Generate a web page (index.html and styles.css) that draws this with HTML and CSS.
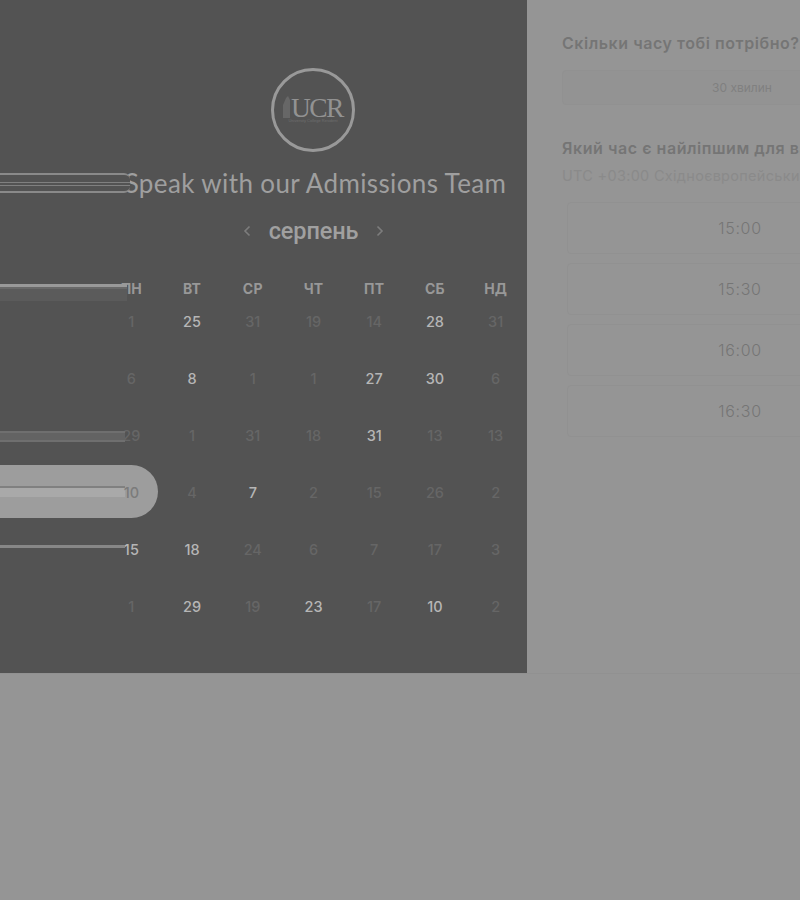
FILE: index.html
```html
<!DOCTYPE html>
<html lang="uk">
<head>
<meta charset="utf-8">
<title>Speak with our Admissions Team</title>
<link rel="stylesheet" href="styles.css">
</head>
<body>
<main class="page">
  <section class="left">
    <div class="logo">
      <svg class="logo-mark" viewBox="0 0 84 84" width="84" height="84" aria-hidden="true">
        <circle cx="42" cy="42" r="40.5" fill="none" stroke="#999999" stroke-width="3"/>
        <path d="M12 50V37l3-7 2-2 2 4v18z" fill="#676767"/>
      </svg>
      <span class="logo-text">UCR</span>
      <span class="logo-sub">University College Resident</span>
    </div>
    <h1 class="title">Speak with our Admissions Team</h1>
    <div class="month">
      <svg class="chev" viewBox="0 0 10 14" width="10" height="14" aria-hidden="true"><path d="M7.5 2.5 3 7l4.5 4.5" fill="none" stroke="#7d7d7d" stroke-width="1.6"/></svg>
      <span class="month-name">серпень</span>
      <svg class="chev" viewBox="0 0 10 14" width="10" height="14" aria-hidden="true"><path d="M2.5 2.5 7 7l-4.5 4.5" fill="none" stroke="#7d7d7d" stroke-width="1.6"/></svg>
    </div>
    <div class="cal-wrap">
      <div class="cal">
        <span class="dow">ПН</span><span class="dow">ВТ</span><span class="dow">СР</span><span class="dow">ЧТ</span><span class="dow">ПТ</span><span class="dow">СБ</span><span class="dow">НД</span>
        <span class="d off">1</span><span class="d on">25</span><span class="d off">31</span><span class="d off">19</span><span class="d off">14</span><span class="d on">28</span><span class="d off">31</span>
        <span class="d off">6</span><span class="d on">8</span><span class="d off">1</span><span class="d off">1</span><span class="d on">27</span><span class="d on">30</span><span class="d off">6</span>
        <span class="d off">29</span><span class="d off">1</span><span class="d off">31</span><span class="d off">18</span><span class="d on">31</span><span class="d off">13</span><span class="d off">13</span>
        <span class="d off sel-num">10</span><span class="d off">4</span><span class="d on">7</span><span class="d off">2</span><span class="d off">15</span><span class="d off">26</span><span class="d off">2</span>
        <span class="d on">15</span><span class="d on">18</span><span class="d off">24</span><span class="d off">6</span><span class="d off">7</span><span class="d off">17</span><span class="d off">3</span>
        <span class="d off">1</span><span class="d on">29</span><span class="d off">19</span><span class="d on">23</span><span class="d off">17</span><span class="d on">10</span><span class="d off">2</span>
      </div>
    </div>
    <div class="smear smear-title"></div>
    <div class="smear smear-dow"></div>
    <div class="smear smear-r3"></div>
    <div class="pill"><div class="pill-band"></div></div>
    <div class="smear smear-r5"></div>
  </section>
  <section class="right">
    <h2 class="q">Скільки часу тобі потрібно?</h2>
    <div class="duration">30 хвилин</div>
    <h2 class="q q2">Який час є найліпшим для вас?</h2>
    <p class="tz">UTC +03:00 Східноєвропейський час</p>
    <ul class="slots">
      <li class="slot">15:00</li>
      <li class="slot">15:30</li>
      <li class="slot">16:00</li>
      <li class="slot">16:30</li>
    </ul>
  </section>
</main>
</body>
</html>
```
FILE: styles.css
```css
html, body {
  margin: 0;
  width: 800px;
  height: 900px;
  overflow: hidden;
  background: #959595;
  font-family: Inter, "Noto Sans", sans-serif;
}
.page {
  display: flex;
  width: 800px;
  height: 674px;
  border-bottom: 1px solid #919191;
  box-sizing: border-box;
}
.left {
  position: relative;
  flex: none;
  width: 527px;
  height: 673px;
  background: #535353;
  box-sizing: border-box;
  padding: 68px 1px 0 101px;
  display: flex;
  flex-direction: column;
  align-items: center;
}
.logo {
  position: relative;
  width: 84px;
  height: 84px;
  flex: none;
  margin-right: 1px;
}
.logo-mark { display: block; }
.logo-text {
  position: absolute;
  left: 20px;
  top: 30px;
  font: 27.5px/20px "Liberation Serif", serif;
  letter-spacing: -1.6px;
  color: #929292;
}
.logo-sub {
  position: absolute;
  left: 11px;
  top: 50px;
  width: 62px;
  text-align: center;
  white-space: nowrap;
  overflow: hidden;
  font: 4px/5px "Liberation Sans", sans-serif;
  color: #6f6f6f;
}
.title {
  margin: 14px 0 0 4px;
  font: 400 26px/34px Lato, sans-serif;
  letter-spacing: 0.38px;
  color: #9f9f9f;
  white-space: nowrap;
}
.month {
  display: flex;
  align-items: center;
  justify-content: center;
  gap: 17px;
  margin-top: 15px;
  height: 32px;
  flex: none;
}
.month-name {
  font: 500 23.5px/32px Roboto, sans-serif;
  color: #a0a0a0;
  letter-spacing: -0.1px;
}
.chev { flex: none; }
.cal-wrap {
  width: 425px;
  margin-top: 32px;
}
.cal {
  display: grid;
  grid-template-columns: repeat(7, 1fr);
  grid-template-rows: 33px repeat(6, 57px);
  justify-items: center;
  align-items: start;
}
.cal > span { position: relative; }
.dow {
  font: 700 14px/20px Inter, sans-serif;
  color: #989898;
  letter-spacing: 0.2px;
}
.d {
  font: 500 14.5px/20px Inter, sans-serif;
}
.on { color: #b6b6b6; }
.off { color: #666666; }
.sel-num { color: #7b7b7b; z-index: 2; }
.smear {
  position: absolute;
  left: 0;
  width: 125px;
  box-sizing: border-box;
}
.smear-title {
  top: 173px;
  height: 20px;
  width: 130px;
  border: solid #8a8a8a;
  border-width: 2px 0;
  border-radius: 0 6px 6px 0;
  background: linear-gradient(#535353 0 7px, #808080 7px 8px, #535353 8px 10px, #808080 10px 11px, #535353 11px);
}
.smear-dow {
  top: 284px;
  width: 127px;
  height: 17px;
  border-top: 3px solid #999999;
  background: linear-gradient(#696969 0 2px, #5b5b5b 2px);
}
.smear-r3 {
  top: 431px;
  height: 11px;
  border: solid #6f6f6f;
  border-width: 2px 0;
  background: #636363;
}
.pill {
  position: absolute;
  left: 0;
  top: 465px;
  width: 158px;
  height: 53px;
  background: #9d9d9d;
  border-radius: 0 26.5px 26.5px 0;
}
.pill-band {
  position: absolute;
  left: 0;
  top: 21px;
  width: 125px;
  height: 11px;
  border-top: 2px solid #808080;
  box-sizing: border-box;
  background: #a9a9a9;
}
.smear-r5 {
  top: 545px;
  height: 3px;
  background: #878787;
}
.right {
  flex: 1;
  min-width: 0;
  box-sizing: border-box;
  padding: 33px 0 0 35px;
  overflow: hidden;
  white-space: nowrap;
}
.q {
  margin: 0;
  font: 600 16px/20px Inter, sans-serif;
  color: #757575;
  letter-spacing: 0.55px;
}
.duration {
  width: 360px;
  height: 35px;
  margin-top: 17px;
  box-sizing: border-box;
  border: 1px solid #919191;
  border-radius: 4px;
  background: #939393;
  font: 400 12px/33px Inter, sans-serif;
  color: #808080;
  text-align: center;
}
.q2 { margin-top: 33px; }
.tz {
  margin: 8px 0 0;
  font: 400 14.5px/20px Inter, sans-serif;
  color: #8a8a8a;
  letter-spacing: 0.3px;
}
.slots {
  list-style: none;
  margin: 16px 0 0 5px;
  padding: 0;
  display: flex;
  flex-direction: column;
  gap: 9px;
}
.slot {
  width: 346px;
  height: 52px;
  box-sizing: border-box;
  border: 1px solid #919191;
  border-radius: 4px;
  font: 300 16px/50px Inter, sans-serif;
  letter-spacing: 0.7px;
  color: #757575;
  text-align: center;
}
```
